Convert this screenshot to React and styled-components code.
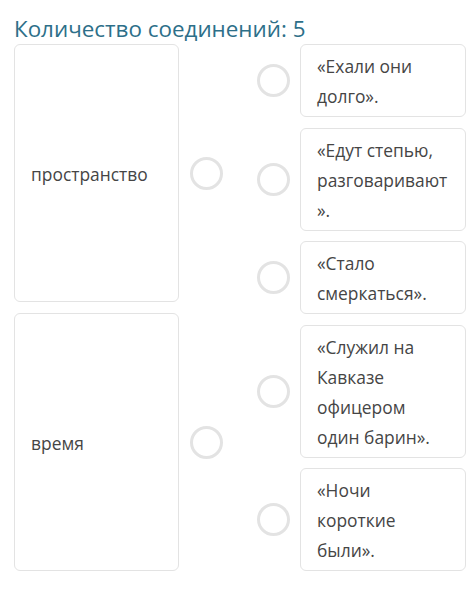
import React from "react";
import styled, { createGlobalStyle } from "styled-components";

const GlobalStyle = createGlobalStyle`
  html, body {
    margin: 0;
    padding: 0;
    background: #ffffff;
  }
  body {
    font-family: "Open Sans", "Noto Sans", "Liberation Sans", sans-serif;
  }
`;

const Page = styled.div`
  width: 474px;
  height: 615px;
  box-sizing: border-box;
  padding: 16px 8px 0 14px;
  background: #fff;
`;

const Title = styled.h1`
  margin: 0 0 3px;
  font-size: 22.4px;
  font-weight: 400;
  line-height: 25px;
  color: #2d6f89;
`;

const Board = styled.div`
  display: flex;
  align-items: stretch;
  justify-content: space-between;
`;

const Column = styled.div`
  display: flex;
  flex-direction: column;
  gap: ${(p) => p.gap}px;
`;

const Row = styled.div`
  display: flex;
  align-items: center;
  gap: ${(p) => p.gap}px;
  flex: ${(p) => (p.grow ? 1 : "none")};
`;

const Card = styled.div`
  box-sizing: border-box;
  width: ${(p) => p.width}px;
  align-self: stretch;
  display: flex;
  align-items: center;
  padding: 6px 16px 5px;
  border: 1px solid #e3e3e3;
  border-radius: 6px;
  background: #fff;
  font-size: 17.4px;
  line-height: 30px;
  color: #454545;
  overflow-wrap: anywhere;
`;

const Dot = styled.span`
  box-sizing: border-box;
  flex: none;
  width: 33px;
  height: 33px;
  border-radius: 50%;
  border: 3px solid #e3e3e3;
  background: #fff;
`;

const left = ["пространство", "время"];

const right = [
  "«Ехали они долго».",
  "«Едут степью, разговаривают».",
  "«Стало смеркаться».",
  "«Служил на Кавказе офицером один барин».",
  "«Ночи короткие были».",
];

export default function App() {
  return (
    <Page>
      <GlobalStyle />
      <Title>Количество соединений: 5</Title>
      <Board>
        <Column gap={11}>
          {left.map((t) => (
            <Row key={t} gap={11} grow>
              <Card width={165}>{t}</Card>
              <Dot />
            </Row>
          ))}
        </Column>
        <Column gap={10.5}>
          {right.map((t) => (
            <Row key={t} gap={10}>
              <Dot />
              <Card width={166}>{t}</Card>
            </Row>
          ))}
        </Column>
      </Board>
    </Page>
  );
}
